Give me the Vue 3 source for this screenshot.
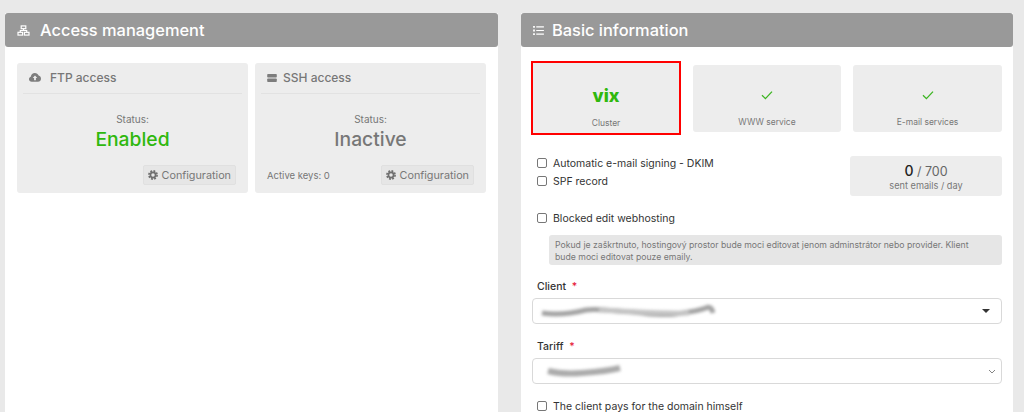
<template>
    <div class="page">
        <section class="panel left">
            <header class="panel-head">
                <svg class="head-icon" viewBox="0 0 14 12" width="13" height="11">
                    <g fill="none" stroke="#fff" stroke-width="1.3">
                        <rect x="4.5" y="1" width="5" height="3" />
                        <rect x="1" y="8" width="5" height="3" />
                        <rect x="8" y="8" width="5" height="3" />
                        <path d="M7 4v2M3.5 8V6h7v2" />
                    </g>
                </svg>
                <h2>Access management</h2>
            </header>
            <div class="cards">
                <div v-for="card in accessCards" :key="card.title" class="card">
                    <div class="card-title">
                        <svg v-if="card.icon === 'cloud'" class="cloud" viewBox="0 0 16 12" width="12" height="9">
                            <path fill="#7d7d7d" d="M3.6 11.6C1.6 11.6 0 10.1 0 8.2c0-1.5 1-2.8 2.4-3.2C2.7 2.2 5 0 7.8 0c2.3 0 4.2 1.4 5 3.4 1.8.4 3.2 2.2 3.2 4.1 0 2.3-1.8 4.1-4 4.1z" />
                            <path fill="#ededed" d="M8 3.2 11 6.6H9.2v3H6.8v-3H5z" />
                        </svg>
                        <svg v-else class="server" viewBox="0 0 12 10" width="10" height="8">
                            <rect y="0" width="12" height="4.3" rx="1" fill="#7d7d7d" />
                            <rect y="5.7" width="12" height="4.3" rx="1" fill="#7d7d7d" />
                        </svg>
                        <span>{{ card.title }}</span>
                    </div>
                    <div class="status">
                        <span class="status-label">Status:</span>
                        <strong :class="card.state">{{ card.value }}</strong>
                    </div>
                    <div class="card-foot">
                        <span class="keys">{{ card.keys }}</span>
                        <button class="config" type="button">
                            <svg viewBox="0 0 12 12" width="10" height="10">
                                <circle cx="6" cy="6" r="3.1" fill="none" stroke="#6f6f6f" stroke-width="2" />
                                <circle cx="6" cy="6" r="4.9" fill="none" stroke="#6f6f6f" stroke-width="2" stroke-dasharray="2.2 1.65" />
                            </svg>
                            Configuration
                        </button>
                    </div>
                </div>
            </div>
        </section>

        <section class="panel right">
            <header class="panel-head">
                <svg class="head-icon" viewBox="0 0 12 10" width="11" height="9">
                    <path fill="#fff" d="M0 0h2v2H0zM0 4h2v2H0zM0 8h2v2H0zM3.5.4H12v1.2H3.5zM3.5 4.4H12v1.2H3.5zM3.5 8.4H12v1.2H3.5z" />
                </svg>
                <h2>Basic information</h2>
            </header>
            <div class="info">
                <div class="tiles">
                    <div class="tile cluster">
                        <span class="vix">vix</span>
                        <span class="tile-label">Cluster</span>
                    </div>
                    <div v-for="name in services" :key="name" class="tile">
                        <svg viewBox="0 0 12 10" width="12" height="10">
                            <path d="M1 5.2 4.4 8.6 11 1.6" fill="none" stroke="#3cb521" stroke-width="1.3" />
                        </svg>
                        <span class="tile-label">{{ name }}</span>
                    </div>
                </div>

                <div class="mail-row">
                    <div class="checks">
                        <label class="check"><input type="checkbox" />Automatic e-mail signing - DKIM</label>
                        <label class="check"><input type="checkbox" />SPF record</label>
                    </div>
                    <div class="sent">
                        <div class="sent-count"><b>0</b> / 700</div>
                        <div class="sent-label">sent emails / day</div>
                    </div>
                </div>

                <label class="check blocked"><input type="checkbox" />Blocked edit webhosting</label>
                <p class="note">Pokud je zaškrtnuto, hostingový prostor bude moci editovat jenom adminstrátor nebo provider. Klient bude moci editovat pouze emaily.</p>

                <div class="field client">
                    <span class="field-label">Client <i>*</i></span>
                    <div class="control">
                        <svg class="scribble" viewBox="0 0 176 18" width="176" height="18">
                            <path d="M3 11c14 2 28 1 44-3 14-2 28 2 46 2 14 1 28 4 44 2 14-2 22-3 30-6 3-2 6 0 7 5" fill="none" stroke="#a3a3a3" stroke-width="5" />
                            <path d="M60 8c30 1 60 4 90 3" fill="none" stroke="#c4c4c4" stroke-width="5" />
                        </svg>
                        <span class="caret"></span>
                    </div>
                </div>
                <div class="field tariff">
                    <span class="field-label">Tariff <i>*</i></span>
                    <div class="control">
                        <svg class="scribble short" viewBox="0 0 78 16" width="78" height="16">
                            <path d="M3 8c12 3 22 3 34 2 14-1 26-2 38-5" fill="none" stroke="#ababab" stroke-width="6" />
                        </svg>
                        <svg class="chevron" viewBox="0 0 8 5" width="8" height="5">
                            <path d="M1 1l3 3 3-3" fill="none" stroke="#777" stroke-width=".9" />
                        </svg>
                    </div>
                </div>
                <label class="check pays"><input type="checkbox" />The client pays for the domain himself</label>
            </div>
        </section>
    </div>
</template>

<script setup>
const accessCards = [
    { title: 'FTP access', icon: 'cloud', value: 'Enabled', state: 'on', keys: '' },
    { title: 'SSH access', icon: 'server', value: 'Inactive', state: 'off', keys: 'Active keys: 0' }
]
const services = ['WWW service', 'E-mail services']
</script>

<style>
html, body {
    margin: 0;
    background: #e9e9e9;
    overflow: hidden;
}
</style>

<style scoped>
.page {
    display: flex;
    gap: 23px;
    height: 399px;
    padding: 13px 0 0 5px;
    overflow: hidden;
    font-family: Inter, "Open Sans", sans-serif;
    color: #333;
}

.panel {
    background: #fff;
    height: 420px;
}

.left {
    width: 493px;
}

.right {
    width: 492px;
}

.panel-head {
    display: flex;
    align-items: center;
    height: 34px;
    background: #999;
    border-radius: 3px;
    color: #fff;
}

.panel-head h2 {
    margin: 0;
    font-size: 16.4px;
    font-weight: 500;
}

.head-icon {
    margin-left: 12px;
    margin-right: 10px;
}

.right .head-icon {
    margin-right: 8px;
}

.cards {
    display: flex;
    gap: 7px;
    padding: 16px 12px;
}

.card {
    display: flex;
    flex-direction: column;
    width: 231px;
    height: 130px;
    box-sizing: border-box;
    padding: 0 6px;
    background: #ededed;
    border-radius: 3px;
}

.card-title {
    display: flex;
    align-items: center;
    height: 31px;
    padding-bottom: 1px;
    box-sizing: border-box;
    border-bottom: 1px solid #e2e2e2;
    color: #777;
    font-size: 12px;
    font-weight: 500;
}

.cloud {
    margin: 0 9px 0 6px;
}

.server {
    margin: 0 6px 0 6px;
}

.status {
    display: flex;
    flex-direction: column;
    align-items: center;
    padding-top: 18px;
}

.status-label {
    font-size: 10px;
    color: #777;
    line-height: 14px;
}

.status strong {
    font-size: 19.3px;
    font-weight: 500;
    line-height: 26px;
}

.on {
    color: #2fb80e;
}

.off {
    color: #777;
}

.card-foot {
    display: flex;
    align-items: center;
    justify-content: space-between;
    margin-top: 13px;
    padding: 0 6px;
}

.keys {
    font-size: 9.5px;
    color: #777;
}

.config {
    display: flex;
    align-items: center;
    gap: 4px;
    height: 20px;
    padding: 0 4px;
    background: #e6e6e6;
    border: 1px solid #e0e0e0;
    border-radius: 2px;
    font: 10.8px Inter, sans-serif;
    color: #777;
}

.info {
    padding: 14px 11px 0 10px;
}

.tiles {
    display: flex;
    align-items: center;
    gap: 12px;
}

.tile {
    display: flex;
    flex-direction: column;
    align-items: center;
    justify-content: flex-end;
    gap: 16px;
    box-sizing: border-box;
    width: 149px;
    height: 67px;
    padding-bottom: 4px;
    background: #ededed;
    border-radius: 3px;
}

.tile:nth-child(2) {
    width: 148px;
}

.cluster {
    width: 150px;
    height: 74px;
    gap: 9px;
    padding-bottom: 4px;
    border: 2px solid #f00;
    border-radius: 0;
}

.vix {
    color: #2fb80e;
    font-size: 18px;
    font-weight: 800;
    line-height: 24px;
}

.tile-label {
    font-size: 8.5px;
    line-height: 12px;
    color: #777;
}

.mail-row {
    display: flex;
    justify-content: space-between;
    margin-top: 21px;
}

.checks {
    display: flex;
    flex-direction: column;
    gap: 4px;
    padding: 0 0 0 6px;
}

.check {
    display: flex;
    align-items: center;
    height: 14px;
    font-size: 10.5px;
    color: #333;
}

.check input {
    appearance: none;
    box-sizing: border-box;
    flex: none;
    width: 10px;
    height: 10px;
    margin: 0 6px 0 0;
    background: #fff;
    border: 1px solid #777;
    border-radius: 2px;
}

.sent {
    width: 152px;
    height: 40px;
    background: #ededed;
    border-radius: 3px;
    text-align: center;
}

.sent-count {
    padding-top: 6px;
    font-size: 12.5px;
    line-height: 17px;
    color: #666;
}

.sent-count b {
    font-size: 14px;
    font-weight: 500;
    color: #222;
}

.sent-label {
    font-size: 9.2px;
    line-height: 12px;
    color: #777;
}

.blocked {
    margin: 15px 0 0 6px;
}

.note {
    margin: 10px 0 0 18px;
    padding: 4px 15px 3px 6px;
    height: 23px;
    background: #e6e6e6;
    border-radius: 3px;
    font-size: 8.7px;
    line-height: 12px;
    color: #777;
}

.field {
    display: flex;
    flex-direction: column;
    margin-left: 1px;
}

.client {
    margin-top: 14px;
}

.tariff {
    margin-top: 15px;
}

.field-label {
    height: 19px;
    padding-left: 5px;
    font-size: 10.5px;
    line-height: 16px;
    font-weight: 500;
    color: #333;
}

.field-label i {
    margin-left: 3px;
    color: #e6223c;
    font-style: normal;
}

.control {
    display: flex;
    align-items: center;
    justify-content: space-between;
    box-sizing: border-box;
    height: 26px;
    padding: 0 6px 0 6px;
    background: #fff;
    border: 1px solid #d9d9d9;
    border-radius: 4px;
}

.scribble {
    filter: blur(1.6px);
}

.short {
    margin-left: 6px;
}

.caret {
    margin-right: 5px;
    border-top: 4px solid #333;
    border-left: 4px solid transparent;
    border-right: 4px solid transparent;
}

.chevron {
    margin-right: -1px;
}

.pays {
    margin: 15px 0 0 6px;
}
</style>
